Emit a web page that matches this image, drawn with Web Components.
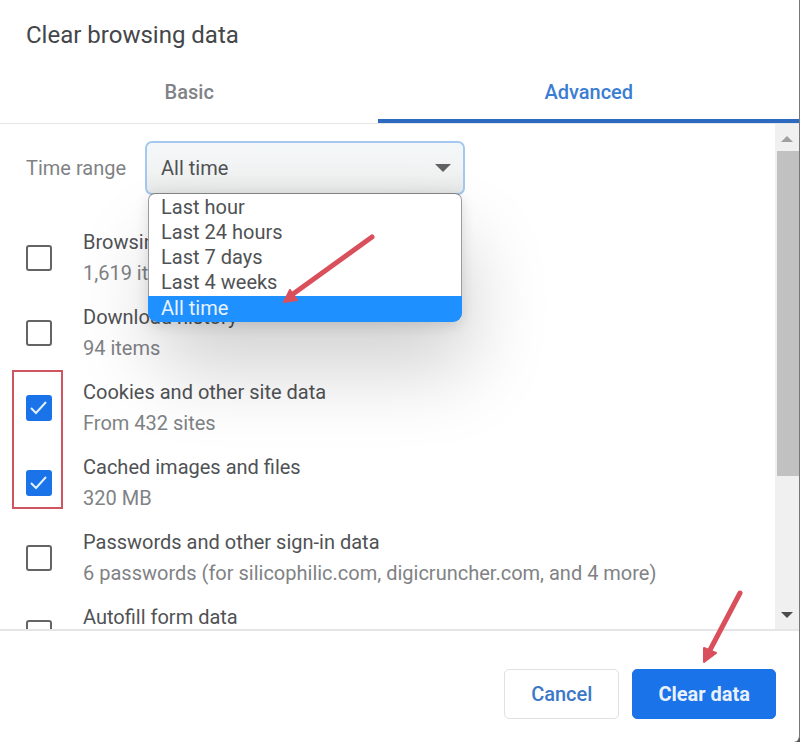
<!DOCTYPE html>
<html lang="en">
<head>
<meta charset="utf-8">
<meta name="viewport" content="width=device-width, initial-scale=1">
<title>Clear browsing data</title>
<style>
  body {
    margin: 0;
    background: #555;
    font-family: Roboto, "Liberation Sans", sans-serif;
    font-size: 20px;
    color: #505255;
    --blue: #1a73e8;
    --grey: #808285;
    --line: #e4e5e7;
    --red: #d9505c;
  }
</style>
</head>
<body>
<clear-dialog>
  <span slot="title">Clear browsing data</span>
  <tab-strip slot="tabs">
    <tab-item>Basic</tab-item>
    <tab-item selected>Advanced</tab-item>
  </tab-strip>

  <time-range value="All time">Time range</time-range>
  <data-list>
    <data-row>Browsing history<span slot="detail">1,619 items</span></data-row>
    <data-row>Download history<span slot="detail">94 items</span></data-row>
    <marked-group>
      <data-row checked>Cookies and other site data<span slot="detail">From 432 sites</span></data-row>
      <data-row checked>Cached images and files<span slot="detail">320 MB</span></data-row>
    </marked-group>
    <data-row>Passwords and other sign-in data<span slot="detail">6 passwords (for silicophilic.com, digicruncher.com, and 4 more)</span></data-row>
    <data-row>Autofill form data</data-row>
  </data-list>

  <dialog-button slot="actions">Cancel</dialog-button>
  <dialog-button slot="actions" primary>Clear data</dialog-button>
</clear-dialog>

<script>
/**
 * Base class: clones the markup of the subclass into an open shadow root.
 */
class BaseElement extends HTMLElement {
  connectedCallback() {
    if (this.shadowRoot) return;
    const template = document.createElement('template');
    template.innerHTML = this.constructor.markup;
    this.attachShadow({mode: 'open'});
    this.shadowRoot.appendChild(template.content.cloneNode(true));
    this.ready();
  }

  /** Called once, after the shadow tree exists. */
  ready() {}
}

class ClearDialog extends BaseElement {
  static get markup() {
    return `
      <style>
        :host {
          display: flex;
          flex-direction: column;
          box-sizing: border-box;
          height: 100vh;
          overflow: hidden;
          background: #fff;
          border-right: 1px solid #777;
          border-bottom-right-radius: 6px;
        }
        h1 {
          margin: 0;
          padding: 19px 26px 9px;
          font-size: 24px;
          line-height: 32px;
          font-weight: 400;
          color: #444649;
        }
        main {
          flex: 1;
          min-height: 0;
          display: flex;
        }
        .content {
          flex: 1;
          min-width: 0;
          overflow: hidden;
          padding: 17px 26px 0;
        }
        footer {
          display: flex;
          justify-content: flex-end;
          gap: 13px;
          padding: 38px 23px 23px;
          border-top: 2px solid var(--line);
        }
      </style>
      <h1><slot name="title"></slot></h1>
      <slot name="tabs"></slot>
      <main>
        <div class="content"><slot></slot></div>
        <scroll-track></scroll-track>
      </main>
      <footer><slot name="actions"></slot></footer>
    `;
  }
}

class TabStrip extends BaseElement {
  static get markup() {
    return `
      <style>
        :host {
          display: grid;
          grid-template-columns: 9fr 10fr;
          height: 63px;
          border-bottom: 1px solid var(--line);
        }
      </style>
      <slot></slot>
    `;
  }

  ready() {
    this.setAttribute('role', 'tablist');
  }
}

class TabItem extends BaseElement {
  static get markup() {
    return `
      <style>
        :host {
          display: grid;
        }
        button {
          border: 0;
          border-top: 4px solid transparent;
          border-bottom: 4px solid transparent;
          padding: 0;
          background: none;
          font: inherit;
          font-weight: 500;
          color: var(--grey);
        }
        :host([selected]) button {
          border-bottom-color: #2b6abf;
          color: #3b7dd2;
        }
      </style>
      <button type="button" role="tab"><slot></slot></button>
    `;
  }

  ready() {
    this.shadowRoot.querySelector('button')
      .setAttribute('aria-selected', this.hasAttribute('selected'));
  }
}

class TimeRange extends BaseElement {
  static get markup() {
    return `
      <style>
        :host {
          display: flex;
          align-items: center;
          gap: 19px;
        }
        label {
          color: var(--grey);
        }
        .field {
          position: relative;
          display: grid;
          align-items: center;
          width: 320px;
        }
        select, .caret {
          grid-area: 1 / 1;
        }
        select {
          appearance: none;
          width: 100%;
          height: 54px;
          padding: 0 14px;
          border: 2px solid #a5c8f0;
          border-radius: 7px;
          outline: 0;
          background: linear-gradient(#f4f7f8, #f1f3f3 60%, #e6e7e7);
          font: inherit;
          color: inherit;
        }
        .caret {
          justify-self: end;
          margin-right: 13px;
          pointer-events: none;
        }
        /* the open list hangs over the rows below */
        ul {
          position: absolute;
          z-index: 1;
          top: 52px;
          left: 3px;
          right: 3px;
          margin: 0;
          padding: 1px 0 0;
          border: 1px solid #9a9b9c;
          border-top-color: #808182;
          border-bottom: 0;
          border-radius: 7px 7px 10px 10px;
          background: #fff;
          list-style: none;
          line-height: 25px;
          box-shadow:
            0 4px 14px rgba(0, 0, 0, 0.12),
            8px 48px 80px rgba(0, 0, 0, 0.18);
        }
        li {
          padding: 0 12px;
        }
        li[aria-selected=true] {
          margin: 1px -1px 0;
          padding: 0 13px 1px;
          border-radius: 0 0 9px 9px;
          background: #1e90ff;
          color: #e8f3ff;
        }
        .arrow {
          position: absolute;
          z-index: 2;
          top: 90px;
          left: 136px;
        }
      </style>
      <label for="range"><slot></slot></label>
      <div class="field">
        <select id="range"></select>
        <svg class="caret" width="18" height="10" aria-hidden="true">
          <path d="M1 1h16L9 9z" fill="#5f6264"/>
        </svg>
        <ul role="listbox"></ul>
        <svg class="arrow" width="96" height="74" aria-hidden="true">
          <path d="M91 6L12 63" stroke="var(--red)" stroke-width="5" stroke-linecap="round"/>
          <path d="M3 71L9 59L16 69z" fill="var(--red)" stroke="var(--red)" stroke-width="2" stroke-linejoin="round"/>
        </svg>
      </div>
    `;
  }

  ready() {
    const value = this.getAttribute('value');
    const select = this.shadowRoot.querySelector('select');
    const list = this.shadowRoot.querySelector('ul');
    ['Last hour', 'Last 24 hours', 'Last 7 days', 'Last 4 weeks', 'All time'].forEach(text => {
      select.add(new Option(text, text, false, text === value));
      const item = document.createElement('li');
      item.textContent = text;
      item.setAttribute('role', 'option');
      item.setAttribute('aria-selected', text === value);
      list.appendChild(item);
    });
  }
}

class DataList extends BaseElement {
  static get markup() {
    return `
      <style>
        :host {
          display: flex;
          flex-direction: column;
          gap: 13px;
          padding-top: 32px;
        }
      </style>
      <slot></slot>
    `;
  }
}

/**
 * Rows framed in red round their tick boxes.
 */
class MarkedGroup extends BaseElement {
  static get markup() {
    return `
      <style>
        :host {
          position: relative;
          display: flex;
          flex-direction: column;
          gap: 13px;
        }
        .frame {
          position: absolute;
          top: -7px;
          bottom: 5px;
          left: -14px;
          width: 47px;
          border: 2px solid #cf5560;
          pointer-events: none;
        }
      </style>
      <slot></slot>
      <div class="frame"></div>
    `;
  }
}

class DataRow extends BaseElement {
  static get markup() {
    return `
      <style>
        :host {
          display: block;
          line-height: 31px;
        }
        label {
          display: flex;
          align-items: center;
          gap: 31px;
          height: 62px;
        }
        .box {
          flex: none;
          display: grid;
          place-items: center;
        }
        input, svg {
          grid-area: 1 / 1;
        }
        input {
          appearance: none;
          box-sizing: border-box;
          width: 26px;
          height: 26px;
          margin: 0;
          border: 2px solid #626466;
          border-radius: 3px;
        }
        input:checked {
          border-color: var(--blue);
          background: var(--blue);
        }
        svg {
          visibility: hidden;
          pointer-events: none;
        }
        input:checked + svg {
          visibility: visible;
        }
        .text {
          align-self: flex-start;
        }
        .detail {
          display: block;
          color: var(--grey);
        }
      </style>
      <label>
        <span class="box">
          <input type="checkbox">
          <svg width="26" height="26" aria-hidden="true">
            <path d="M5 13l5 5L20 7" fill="none" stroke="#e4f1ff" stroke-width="2"/>
          </svg>
        </span>
        <span class="text">
          <slot></slot>
          <span class="detail"><slot name="detail"></slot></span>
        </span>
      </label>
    `;
  }

  ready() {
    this.shadowRoot.querySelector('input').checked = this.hasAttribute('checked');
  }
}

class ScrollTrack extends BaseElement {
  static get markup() {
    return `
      <style>
        :host {
          display: flex;
          flex-direction: column;
          align-items: center;
          width: 24px;
          background: #f0f0f0;
        }
        svg {
          flex: none;
        }
        .thumb {
          flex: 72;
          align-self: stretch;
          margin-left: 2px;
          background: #c1c1c1;
        }
        .rest {
          flex: 28;
        }
      </style>
      <svg width="24" height="27" aria-hidden="true"><path d="M6 18h12l-6-6z" fill="#a0a0a0"/></svg>
      <div class="thumb"></div>
      <div class="rest"></div>
      <svg width="24" height="26" aria-hidden="true"><path d="M6 9h12l-6 6z" fill="#4c4c4c"/></svg>
    `;
  }
}

class DialogButton extends BaseElement {
  static get markup() {
    return `
      <style>
        :host {
          position: relative;
          display: block;
        }
        button {
          height: 50px;
          padding: 0 26px;
          border: 1px solid #dfe1e5;
          border-radius: 5px;
          background: #fff;
          font: inherit;
          font-weight: 500;
          color: #3b78c8;
        }
        :host([primary]) button {
          padding: 0 25px;
          border-color: var(--blue);
          background: var(--blue);
          font-weight: 700;
          color: #e8f1fd;
        }
        svg {
          display: none;
        }
        :host([primary]) svg {
          position: absolute;
          display: block;
          bottom: 54px;
          right: 31px;
        }
      </style>
      <button type="button"><slot></slot></button>
      <svg width="44" height="76" aria-hidden="true">
        <path d="M39 4L9 61" stroke="var(--red)" stroke-width="5" stroke-linecap="round"/>
        <path d="M3 73L3 59L15 64z" fill="var(--red)" stroke="var(--red)" stroke-width="2" stroke-linejoin="round"/>
      </svg>
    `;
  }
}

customElements.define('clear-dialog', ClearDialog);
customElements.define('tab-strip', TabStrip);
customElements.define('tab-item', TabItem);
customElements.define('time-range', TimeRange);
customElements.define('data-list', DataList);
customElements.define('marked-group', MarkedGroup);
customElements.define('data-row', DataRow);
customElements.define('scroll-track', ScrollTrack);
customElements.define('dialog-button', DialogButton);
</script>
</body>
</html>
